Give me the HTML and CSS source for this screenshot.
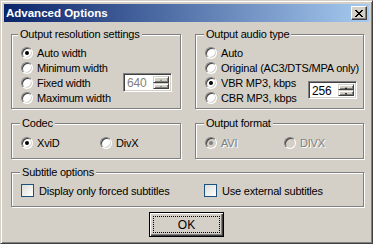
FILE: index.html
```html
<!DOCTYPE html>
<html lang="en">
<head>
    <meta charset="UTF-8">
    <title>Advanced Options</title>
    <link rel="stylesheet" href="styles.css">
</head>
<body>
<div class="window">
    <div class="titlebar">
        <span class="title">Advanced Options</span>
        <span class="close">
            <svg width="8" height="7" viewBox="0 0 8 7"><path d="M0 0h2v1h1v1h2V1h1V0h2v1H7v1H6v1H5v1h1v1h1v1h1v1H6V6H5V5H3v1H2v1H0V6h1V5h1V4h1V3H2V2H1V1H0z" fill="#000"/></svg>
        </span>
    </div>

    <div class="client">
        <div class="groups">
            <fieldset class="group group-res">
                <legend>Output resolution settings</legend>
                <label class="opt"><span class="radio checked"></span>Auto width</label>
                <label class="opt"><span class="radio"></span>Minimum width</label>
                <div class="opt-line">
                    <label class="opt"><span class="radio"></span>Fixed width</label>
                    <div class="spin disabled">
                        <span class="spin-value">640</span>
                        <span class="spin-btns"><span class="spin-btn up"></span><span class="spin-btn down"></span></span>
                    </div>
                </div>
                <label class="opt"><span class="radio"></span>Maximum width</label>
            </fieldset>

            <fieldset class="group group-audio">
                <legend>Output audio type</legend>
                <label class="opt"><span class="radio"></span>Auto</label>
                <label class="opt"><span class="radio"></span>Original (AC3/DTS/MPA only)</label>
                <div class="opt-line">
                    <div class="opt-col">
                        <label class="opt"><span class="radio checked"></span>VBR MP3, kbps</label>
                        <label class="opt"><span class="radio"></span>CBR MP3, kbps</label>
                    </div>
                    <div class="spin">
                        <span class="spin-value">256</span>
                        <span class="spin-btns"><span class="spin-btn up"></span><span class="spin-btn down"></span></span>
                    </div>
                </div>
            </fieldset>

            <fieldset class="group group-small">
                <legend>Codec</legend>
                <div class="pair">
                    <label class="opt"><span class="radio checked"></span>XviD</label>
                    <label class="opt"><span class="radio"></span>DivX</label>
                </div>
            </fieldset>

            <fieldset class="group group-small disabled">
                <legend>Output format</legend>
                <div class="pair">
                    <label class="opt"><span class="radio checked"></span>AVI</label>
                    <label class="opt"><span class="radio"></span>DIVX</label>
                </div>
            </fieldset>

            <fieldset class="group group-subs">
                <legend>Subtitle options</legend>
                <div class="subs">
                    <label class="opt"><span class="check"></span>Display only forced subtitles</label>
                    <label class="opt"><span class="check"></span>Use external subtitles</label>
                </div>
            </fieldset>
        </div>

        <div class="actions">
            <button class="btn default"><span class="focus">OK</span></button>
        </div>
    </div>
</div>
</body>
</html>
```

FILE: styles.css
```css
* {
    box-sizing: border-box;
}
body {
    margin: 0;
    font-family: "Liberation Sans", Arial, sans-serif;
    font-size: 11px;
    letter-spacing: -0.2px;
    color: #000;
    background: #d4d0c8;
}
.window {
    width: 373px;
    height: 244px;
    background: #d4d0c8;
    border: 1px solid;
    border-color: #d4d0c8 #404040 #404040 #d4d0c8;
    box-shadow: inset 1px 1px #fff, inset -1px -1px #808080;
    padding: 3px;
}
.titlebar {
    height: 18px;
    display: flex;
    align-items: center;
    justify-content: space-between;
    padding: 0 2px 0 2px;
    background: linear-gradient(to right, #0a246a, #a6caf0);
}
.title {
    color: #fff;
    font-weight: bold;
    font-size: 11.5px;
    letter-spacing: 0;
}
.close {
    width: 16px;
    height: 14px;
    display: flex;
    align-items: center;
    justify-content: center;
    background: #d4d0c8;
    border: 1px solid;
    border-color: #fff #404040 #404040 #fff;
    box-shadow: inset -1px -1px #808080;
}
.close svg {
    display: block;
}

.client {
    padding: 6px 4px 0 7px;
}
.groups {
    display: grid;
    grid-template-columns: 170px 169px;
    column-gap: 14px;
    row-gap: 7px;
}

/* etched group box */
.group {
    margin: 0;
    padding: 0 8px 0 9px;
    border: 1px solid #808080;
    box-shadow: 1px 1px 0 #fff, inset 1px 1px 0 #fff;
    min-width: 0;
}
.group legend {
    padding: 0 2px;
    margin-left: -1px;
    line-height: 13px;
    background: #d4d0c8;
}
.group-res legend {
    margin-left: -3px;
}
.group-res,
.group-audio {
    height: 81px;
    padding-top: 4px;
}
.group-small {
    height: 42px;
    margin-top: 1px;
    padding-top: 5px;
}
.group-subs {
    grid-column: 1 / 3;
    height: 41px;
    padding-top: 4px;
}

.opt {
    display: flex;
    align-items: center;
    height: 15px;
    white-space: nowrap;
}
.opt-line {
    display: flex;
    align-items: center;
    justify-content: space-between;
}
.opt-col {
    display: flex;
    flex-direction: column;
}
.pair {
    display: grid;
    grid-template-columns: 79px 1fr;
}
.subs {
    display: grid;
    grid-template-columns: 183px 1fr;
}

/* radio button */
.radio {
    position: relative;
    flex: none;
    width: 12px;
    height: 12px;
    margin-right: 4px;
    border-radius: 50%;
    border: 1px solid;
    border-color: #808080 #fff #fff #808080;
    background: #fff;
    box-shadow: inset 1px 1px #404040, inset -1px -1px #d4d0c8;
}
.radio.checked::after {
    content: "";
    position: absolute;
    left: 3px;
    top: 3px;
    width: 4px;
    height: 4px;
    border-radius: 50%;
    background: #000;
}
.disabled .opt {
    color: #808080;
    text-shadow: 1px 1px 0 #fff;
}
.disabled .radio {
    background: #d4d0c8;
}
.disabled .radio.checked::after {
    background: #808080;
}

/* checkbox */
.check {
    flex: none;
    width: 13px;
    height: 13px;
    margin-right: 5px;
    border: 1px solid #1c5180;
    background: linear-gradient(135deg, #dcdcd7, #fff);
}

/* spin edit */
.spin {
    width: 49px;
    height: 19px;
    margin: -2px 0;
    display: flex;
    align-items: stretch;
    border: 1px solid;
    border-color: #808080 #fff #fff #808080;
    box-shadow: inset 1px 1px #404040, inset -1px -1px #d4d0c8;
    background: #fff;
    padding: 2px;
    font-size: 12px;
}
.group-audio .spin {
    height: 18px;
    margin: 0 -2px 0 0;
}
.spin-value {
    flex: 1;
    line-height: 14px;
    padding-left: 1px;
}
.spin.disabled .spin-value {
    color: #808080;
}
.spin-btns {
    width: 16px;
    display: flex;
    flex-direction: column;
}
.spin-btn {
    flex: 1;
    position: relative;
    background: #d4d0c8;
    border: 1px solid;
    border-color: #d4d0c8 #404040 #404040 #d4d0c8;
    box-shadow: inset 1px 1px #fff, inset -1px -1px #808080;
}
.spin-btn::after {
    content: "";
    position: absolute;
    left: 6px;
    top: 2px;
    border-left: 1.5px solid transparent;
    border-right: 1.5px solid transparent;
}
.spin-btn.up::after {
    border-bottom: 2px solid #000;
}
.spin-btn.down::after {
    border-top: 2px solid #000;
}
.spin.disabled .spin-btn.up::after {
    border-bottom-color: #808080;
}
.spin.disabled .spin-btn.down::after {
    border-top-color: #808080;
}

/* buttons */
.actions {
    display: flex;
    justify-content: center;
    padding: 5px 3px 0 0;
}
.btn {
    width: 75px;
    height: 25px;
    padding: 3px;
    font: inherit;
    background: #d4d0c8;
    border: 1px solid #000;
    box-shadow: inset 1px 1px #fff, inset -1px -1px #404040, inset -2px -2px #808080;
}
.focus {
    display: flex;
    align-items: center;
    justify-content: center;
    height: 100%;
    outline: 1px dotted #000;
    outline-offset: -1px;
    font-size: 12px;
}
```
